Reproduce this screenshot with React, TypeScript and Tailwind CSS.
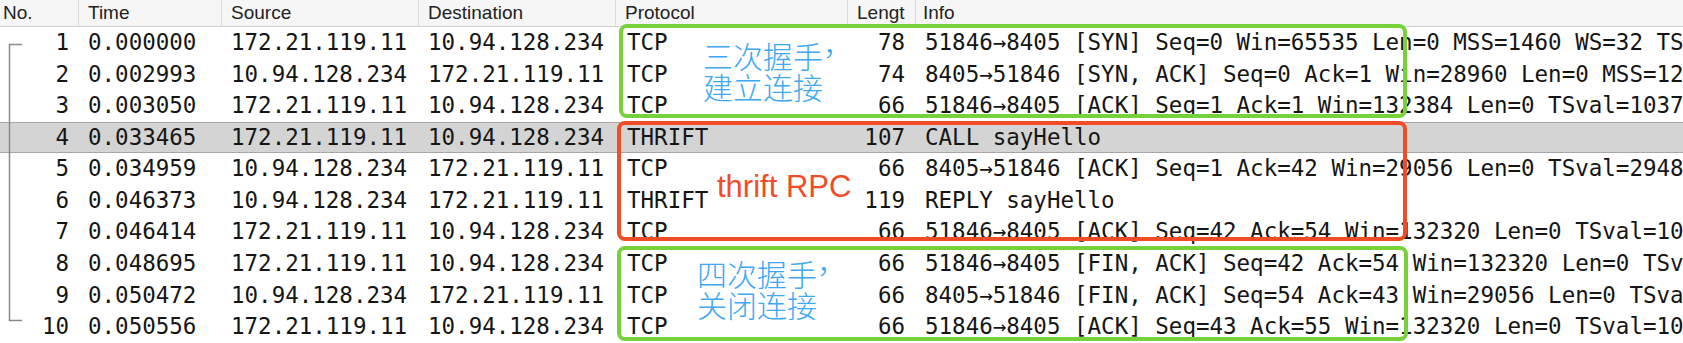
const mono = { fontFamily: '"DejaVu Sans Mono", "Liberation Mono", monospace' };

type Row = {
  no: number;
  time: string;
  src: string;
  dst: string;
  proto: string;
  len: number;
  info: string;
};

const ROWS: Row[] = [
  { no: 1, time: '0.000000', src: '172.21.119.11', dst: '10.94.128.234', proto: 'TCP', len: 78, info: '51846→8405 [SYN] Seq=0 Win=65535 Len=0 MSS=1460 WS=32 TSval=1037 TSecr=0 SACK_PERM=1' },
  { no: 2, time: '0.002993', src: '10.94.128.234', dst: '172.21.119.11', proto: 'TCP', len: 74, info: '8405→51846 [SYN, ACK] Seq=0 Ack=1 Win=28960 Len=0 MSS=1220 SACK_PERM=1' },
  { no: 3, time: '0.003050', src: '172.21.119.11', dst: '10.94.128.234', proto: 'TCP', len: 66, info: '51846→8405 [ACK] Seq=1 Ack=1 Win=132384 Len=0 TSval=1037 TSecr=2948' },
  { no: 4, time: '0.033465', src: '172.21.119.11', dst: '10.94.128.234', proto: 'THRIFT', len: 107, info: 'CALL sayHello' },
  { no: 5, time: '0.034959', src: '10.94.128.234', dst: '172.21.119.11', proto: 'TCP', len: 66, info: '8405→51846 [ACK] Seq=1 Ack=42 Win=29056 Len=0 TSval=2948 TSecr=1037' },
  { no: 6, time: '0.046373', src: '10.94.128.234', dst: '172.21.119.11', proto: 'THRIFT', len: 119, info: 'REPLY sayHello' },
  { no: 7, time: '0.046414', src: '172.21.119.11', dst: '10.94.128.234', proto: 'TCP', len: 66, info: '51846→8405 [ACK] Seq=42 Ack=54 Win=132320 Len=0 TSval=1037 TSecr=2948' },
  { no: 8, time: '0.048695', src: '172.21.119.11', dst: '10.94.128.234', proto: 'TCP', len: 66, info: '51846→8405 [FIN, ACK] Seq=42 Ack=54 Win=132320 Len=0 TSval=1037 TSecr=2948' },
  { no: 9, time: '0.050472', src: '10.94.128.234', dst: '172.21.119.11', proto: 'TCP', len: 66, info: '8405→51846 [FIN, ACK] Seq=54 Ack=43 Win=29056 Len=0 TSval=2948 TSecr=1037' },
  { no: 10, time: '0.050556', src: '172.21.119.11', dst: '10.94.128.234', proto: 'TCP', len: 66, info: '51846→8405 [ACK] Seq=43 Ack=55 Win=132320 Len=0 TSval=1037 TSecr=2948' },
];

const cjk = { fontFamily: '"Noto Sans CJK SC", sans-serif' };

export default function App() {
  return (
    <div className="relative w-[1683px] h-[343px] overflow-hidden bg-white text-[#151515]">
      {/* header */}
      <div
        className="flex h-[27px] box-border bg-[#f6f6f6] border-b border-[#d0d0d0] text-[19px] text-[#222] leading-[26px]"
        style={{ fontFamily: '"Liberation Sans", Arial, sans-serif' }}
      >
        <div className="w-[78px] shrink-0 pl-[3px]">No.</div>
        <div className="w-[143px] shrink-0 pl-[9px] border-l border-[#dcdcdc]">Time</div>
        <div className="w-[197px] shrink-0 pl-[9px] border-l border-[#dcdcdc]">Source</div>
        <div className="w-[197px] shrink-0 pl-[9px] border-l border-[#dcdcdc]">Destination</div>
        <div className="w-[232px] shrink-0 pl-[9px] border-l border-[#dcdcdc]">Protocol</div>
        <div className="w-[68px] shrink-0 pl-[9px] border-l border-[#dcdcdc] overflow-hidden">Lengt</div>
        <div className="flex-1 pl-[7px] border-l border-[#dcdcdc]">Info</div>
      </div>

      {/* packet rows */}
      <div className="text-[22.5px] whitespace-nowrap" style={mono}>
        {ROWS.map((r) => (
          <div
            key={r.no}
            className={`flex items-center h-[31.6px] box-border ${
              r.no === 4 ? 'bg-[#d4d4d4] border-y border-[#a6a6a6]' : ''
            }`}
          >
            <div className="w-[78px] shrink-0 pr-[9px] text-right">{r.no}</div>
            <div className="w-[143px] shrink-0 pl-[10px]">{r.time}</div>
            <div className="w-[197px] shrink-0 pl-[10px]">{r.src}</div>
            <div className="w-[197px] shrink-0 pl-[10px]">{r.dst}</div>
            <div className="w-[232px] shrink-0 pl-[12px]">{r.proto}</div>
            <div className="w-[68px] shrink-0 pr-[10px] text-right">{r.len}</div>
            <div className="flex-1 pl-[10px] overflow-hidden">{r.info}</div>
          </div>
        ))}
      </div>

      {/* conversation bracket */}
      <svg className="absolute left-0 top-0" width="30" height="343">
        <path d="M22 44.5H9.5V320.5H22" fill="none" stroke="#8a8a8a" strokeWidth="1.5" />
      </svg>

      {/* annotations */}
      <div className="absolute left-[619px] top-[24px] w-[788px] h-[94px] border-[4px] border-[#76d13b] rounded-[8px]" />
      <div className="absolute left-[617px] top-[121px] w-[790px] h-[120px] border-[4px] border-[#f04c27] rounded-[8px]" />
      <div className="absolute left-[617px] top-[246px] w-[791px] h-[95px] border-[4px] border-[#76d13b] rounded-[8px]" />

      <div className="absolute left-[703px] top-[40px] text-[30px] leading-[31px] font-light text-[#3ea8f2]" style={cjk}>
        <div>
          三次握手<span className="relative -top-[13px]">，</span>
        </div>
        <div>建立连接</div>
      </div>

      <div
        className="absolute left-[717px] top-[171px] text-[31px] leading-[31px] text-[#f04c27]"
        style={{ fontFamily: '"Liberation Sans", Arial, sans-serif' }}
      >
        thrift RPC
      </div>

      <div className="absolute left-[697px] top-[258px] text-[30px] leading-[31px] font-light text-[#3ea8f2]" style={cjk}>
        <div>
          四次握手<span className="relative -top-[13px]">，</span>
        </div>
        <div>关闭连接</div>
      </div>
    </div>
  );
}
